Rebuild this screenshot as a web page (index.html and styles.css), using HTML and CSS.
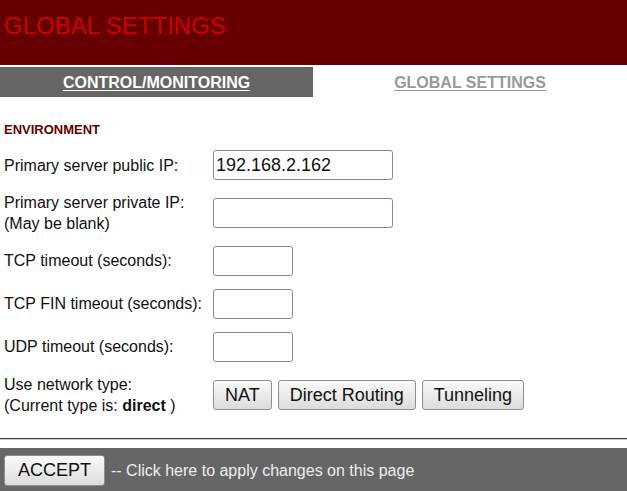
FILE: index.html
```html
<!DOCTYPE html>
<html>
<head>
<meta charset="utf-8">
<link rel="stylesheet" href="styles.css">
</head>
<body>
<header class="banner"><h1 class="banner-title">GLOBAL SETTINGS</h1></header>
<nav class="tabs">
  <a class="tab" href="#">CONTROL/MONITORING</a>
  <a class="tab tab-active" href="#">GLOBAL SETTINGS</a>
</nav>
<main class="content">
  <h2 class="section">ENVIRONMENT</h2>
  <form class="settings">
    <label class="label"><span>Primary server public IP:</span></label>
    <div class="control"><input class="field field-wide" type="text" value="192.168.2.162"></div>

    <label class="label"><span>Primary server private IP:<br>(May be blank)</span></label>
    <div class="control"><input class="field field-wide" type="text" value=""></div>

    <label class="label label-small"><span>TCP timeout (seconds):</span></label>
    <div class="control control-top"><input class="field field-narrow" type="text" value=""></div>

    <label class="label label-small"><span>TCP FIN timeout (seconds):</span></label>
    <div class="control control-top"><input class="field field-narrow" type="text" value=""></div>

    <label class="label label-small"><span>UDP timeout (seconds):</span></label>
    <div class="control control-top"><input class="field field-narrow" type="text" value=""></div>

    <label class="label label-last"><span>Use network type:<br>(Current type is: <b>direct</b> )</span></label>
    <div class="control control-last buttons">
      <button class="btn" type="button">NAT</button>
      <button class="btn" type="button">Direct Routing</button>
      <button class="btn" type="button">Tunneling</button>
    </div>
  </form>
</main>
<hr class="divider">
<footer class="footer">
  <button class="btn btn-accept" type="button">ACCEPT</button>
  <span class="footer-text">-- Click here to apply changes on this page</span>
</footer>
</body>
</html>
```

FILE: styles.css
```css
html, body {
  margin: 0;
  padding: 0;
  background: #fff;
}
body {
  font-family: "Liberation Sans", Arial, sans-serif;
  font-size: 16px;
  color: #111;
  overflow: hidden;
}
.banner {
  background: #660000;
  height: 65px;
  padding: 12px 4px 0;
  box-sizing: border-box;
}
.banner-title {
  margin: 0;
  font-size: 24px;
  font-weight: normal;
  line-height: 28px;
  color: #cc0000;
}
.tabs {
  margin-top: 2px;
  display: grid;
  grid-template-columns: 313px 1fr;
  height: 30px;
}
.tab {
  display: flex;
  align-items: center;
  justify-content: center;
  padding-top: 1px;
  font-weight: bold;
  font-size: 16px;
  color: #fff;
  background: #666;
  text-decoration: underline;
  text-underline-offset: 2px;
}
.tab-active {
  background: #fff;
  color: #999;
}
.content {
  padding: 0 4px;
}
.section {
  margin: 25px 0 13px;
  font-size: 13px;
  line-height: 15px;
  font-weight: bold;
  color: #660000;
}
.settings {
  display: grid;
  grid-template-columns: 209px 1fr;
  grid-template-rows: 30px 42px 31px 31px 31px 42px;
  row-gap: 12px;
}
.label {
  display: flex;
  align-items: center;
  line-height: 21px;
}
.label-small {
  align-items: flex-start;
  padding-top: 4px;
}
.control {
  display: flex;
  align-items: center;
}
.control-top {
  align-items: flex-start;
}
.label-last, .control-last {
  margin-top: -2px;
}
.field {
  height: 30px;
  box-sizing: border-box;
  border: 1px solid #8a8a8a;
  border-radius: 3px;
  padding: 0 2px;
  font-family: "Liberation Sans", Arial, sans-serif;
  font-size: 18px;
  color: #111;
  background: #fff;
}
.field-wide { width: 180px; }
.field-narrow { width: 80px; }
.buttons {
  gap: 6px;
}
.btn {
  height: 30px;
  box-sizing: border-box;
  padding: 0 11px;
  border: 1px solid #8f8f8f;
  border-radius: 3px;
  background: linear-gradient(#fafafa, #dcdcdc);
  font-family: "Liberation Sans", Arial, sans-serif;
  font-size: 18px;
  color: #111;
}
.divider {
  margin: 21px 0 8px;
  border: 0;
  border-top: 1px solid #444;
  border-bottom: 1px solid #ccc;
  height: 0;
}
.footer {
  background: #666;
  padding: 7px 4px 10px;
  display: flex;
  align-items: center;
  gap: 6px;
}
.btn-accept {
  width: 101px;
  height: 31px;
  padding: 0;
}
.footer-text {
  color: #eee;
  font-size: 16px;
}
```
